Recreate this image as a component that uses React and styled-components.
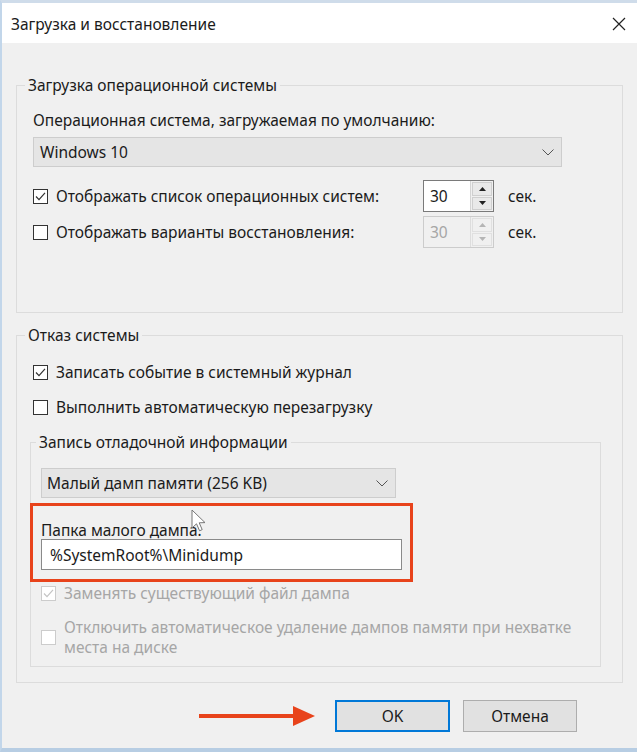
import React from 'react'
import styled, { createGlobalStyle } from 'styled-components'

const GlobalStyle = createGlobalStyle`
  html, body { margin: 0; padding: 0; background: #f0f0f0; }
  body { font-family: "Noto Sans", "Open Sans", sans-serif; color: #1b1b1b; font-size: 15.5px; }
  * { box-sizing: border-box; }
`;

const Window = styled.div`
  width: 637px;
  height: 752px;
  display: flex;
  flex-direction: column;
  border-top: 3px solid #cfdcea;
  border-left: 2px solid #c2d6ea;
  border-bottom: 4px solid #b7cde3;
  background: #f0f0f0;
  overflow: hidden;
`;

const TitleBar = styled.div`
  height: 40px;
  flex: none;
  background: #ffffff;
  display: flex;
  align-items: center;
  justify-content: space-between;
  padding: 2px 11px 0 9px;
`;

const Body = styled.div`
  flex: 1;
  padding: 32px 14px 0 14px;
  display: flex;
  flex-direction: column;
`;

const Group = styled.fieldset`
  margin: 0;
  margin-top: ${p => p.$top || 0}px;
  padding: 0;
  min-width: 0;
  border: 1px solid #dcdcdc;
  width: ${p => p.$width ? p.$width + 'px' : 'auto'};
  margin-left: ${p => p.$left || 0}px;
`;

const Legend = styled.legend`
  margin-left: ${p => p.$offset}px;
  padding: 0 3px;
  line-height: 20px;
`;

const GroupBody = styled.div`
  display: flex;
  flex-direction: column;
  padding: ${p => p.$pad};
`;

const Label = styled.div`
  line-height: ${p => p.$lh || 20}px;
  margin-bottom: ${p => p.$mb || 0}px;
`;

const Select = styled.div`
  width: ${p => p.$width}px;
  height: 30px;
  flex: none;
  background: #e5e5e5;
  border: 1px solid #cdcdcd;
  display: flex;
  align-items: center;
  justify-content: space-between;
  padding: 0 7px 0 ${p => p.$padLeft}px;
  margin-top: ${p => p.$mt || 0}px;
  margin-bottom: ${p => p.$mb || 0}px;
`;

const SpinRow = styled.div`
  display: grid;
  grid-template-columns: 390px 71px auto;
  align-items: center;
  height: 32px;
  margin-bottom: ${p => p.$mb || 0}px;
`;

const CheckRow = styled.label`
  display: flex;
  align-items: center;
  gap: 8px;
  line-height: 20px;
  color: ${p => p.$disabled ? '#a6a6a6' : '#1b1b1b'};
  margin-top: ${p => p.$top || 0}px;
`;

const CheckText = styled.span`
  max-width: ${p => p.$max ? p.$max + 'px' : 'none'};
`;

const Box = styled.span`
  width: 15px;
  height: 15px;
  flex: none;
  background: #ffffff;
  border: 1px solid ${p => p.$disabled ? '#cccccc' : '#333333'};
  display: flex;
  align-items: center;
  justify-content: center;
`;

const Spin = styled.div`
  height: 32px;
  display: flex;
  border: 1px solid ${p => p.$disabled ? '#cccccc' : '#7a7a7a'};
  background: ${p => p.$disabled ? '#f0f0f0' : '#ffffff'};
`;

const SpinValue = styled.div`
  flex: 1;
  display: flex;
  align-items: center;
  padding-left: 6px;
  color: ${p => p.$disabled ? '#a6a6a6' : '#1b1b1b'};
`;

const SpinButtons = styled.div`
  width: 23px;
  display: flex;
  flex-direction: column;
  gap: 1px;
  padding: 1px;
  background: #f0f0f0;
  border-left: 1px solid ${p => p.$disabled ? '#dddddd' : '#d4d4d4'};
`;

const SpinButton = styled.div`
  flex: 1;
  display: flex;
  align-items: center;
  justify-content: center;
  background: ${p => p.$disabled ? '#f0f0f0' : '#e9e9e9'};
  border: 1px solid ${p => p.$disabled ? '#e0e0e0' : '#cfcfcf'};
`;

const Unit = styled.span`
  padding-left: 14px;
`;

const Highlight = styled.div`
  position: relative;
  width: 383px;
  margin-left: -11px;
  margin-top: 5px;
  border: 3px solid #e8431b;
  padding: 15px 0 9px 8px;
`;

const TextInput = styled.div`
  width: 361px;
  height: 31px;
  background: #ffffff;
  border: 1px solid #8a8a8a;
  display: flex;
  align-items: center;
  padding-left: 8px;
`;

const Cursor = styled.svg`
  position: absolute;
  left: 158px;
  top: 3px;
`;

const ButtonRow = styled.div`
  display: flex;
  justify-content: flex-end;
  align-items: center;
  gap: 13px;
  margin-top: 17px;
  padding-right: 46px;
`;

const Button = styled.div`
  width: ${p => p.$width}px;
  height: 32px;
  display: flex;
  align-items: center;
  justify-content: center;
  background: #e1e1e1;
  border: ${p => p.$primary ? '2px solid #0078d7' : '1px solid #adadad'};
`;

const Arrow = styled.svg`
  margin-right: 7px;
`;

function Check({ checked, disabled }) {
  const c = disabled ? '#c4c4c4' : '#333333';
  return (
    <Box $disabled={disabled}>
      {checked && (
        <svg width="13" height="13" viewBox="0 0 13 13">
          <path d="M2 6.5 L5 9.6 L11 2.8" fill="none" stroke={c} strokeWidth="1.2" />
        </svg>
      )}
    </Box>
  );
}

function Chevron() {
  return (
    <svg width="12" height="7" viewBox="0 0 12 7">
      <path d="M0.5 0.5 L6 6 L11.5 0.5" fill="none" stroke="#555" strokeWidth="1" />
    </svg>
  );
}

function Spinner({ value, disabled }) {
  const c = disabled ? '#b5b5b5' : '#222';
  return (
    <Spin $disabled={disabled}>
      <SpinValue $disabled={disabled}>{value}</SpinValue>
      <SpinButtons $disabled={disabled}>
        <SpinButton $disabled={disabled}>
          <svg width="7" height="4" viewBox="0 0 7 4"><path d="M0 4 L3.5 0 L7 4 Z" fill={c} /></svg>
        </SpinButton>
        <SpinButton $disabled={disabled}>
          <svg width="7" height="4" viewBox="0 0 7 4"><path d="M0 0 L3.5 4 L7 0 Z" fill={c} /></svg>
        </SpinButton>
      </SpinButtons>
    </Spin>
  );
}

export default function App() {
  return (
    <>
      <GlobalStyle />
      <Window>
        <TitleBar>
          <span>Загрузка и восстановление</span>
          <svg width="14" height="14" viewBox="0 0 14 14">
            <path d="M1 1 L13 13 M13 1 L1 13" stroke="#222" strokeWidth="1.2" />
          </svg>
        </TitleBar>
        <Body>
          <Group>
            <Legend $offset={8}>Загрузка операционной системы</Legend>
            <GroupBody $pad="15px 0 64px 16px">
              <Label $mb={7}>Операционная система, загружаемая по умолчанию:</Label>
              <Select $width={529} $padLeft={6} $mb={13}>
                <span>Windows 10</span>
                <Chevron />
              </Select>
              <SpinRow $mb={4}>
                <CheckRow>
                  <Check checked />
                  <span>Отображать список операционных систем:</span>
                </CheckRow>
                <Spinner value="30" />
                <Unit>сек.</Unit>
              </SpinRow>
              <SpinRow>
                <CheckRow>
                  <Check />
                  <span>Отображать варианты восстановления:</span>
                </CheckRow>
                <Spinner value="30" disabled />
                <Unit>сек.</Unit>
              </SpinRow>
            </GroupBody>
          </Group>

          <Group $top={12}>
            <Legend $offset={8}>Отказ системы</Legend>
            <GroupBody $pad="17px 0 15px 16px">
              <CheckRow>
                <Check checked />
                <span>Записать событие в системный журнал</span>
              </CheckRow>
              <CheckRow $top={15}>
                <Check />
                <span>Выполнить автоматическую перезагрузку</span>
              </CheckRow>

              <Group $top={15} $left={-3} $width={571}>
                <Legend $offset={5}>Запись отладочной информации</Legend>
                <GroupBody $pad="16px 0 9px 10px">
                  <Select $width={355} $padLeft={5}>
                    <span>Малый дамп памяти (256 KB)</span>
                    <Chevron />
                  </Select>
                  <Highlight>
                    <Label $lh={18}>Папка малого дампа:</Label>
                    <TextInput>%SystemRoot%\Minidump</TextInput>
                    <Cursor width="16" height="24" viewBox="0 0 16 24">
                      <path d="M1 1 L1 19 L5.5 14.8 L8.6 21.8 L11.2 20.6 L8.2 13.8 L14 13.6 Z" fill="#ffffff" stroke="#777" strokeWidth="1" />
                    </Cursor>
                  </Highlight>
                  <CheckRow $disabled $top={1}>
                    <Check checked disabled />
                    <span>Заменять существующий файл дампа</span>
                  </CheckRow>
                  <CheckRow $disabled $top={14}>
                    <Check disabled />
                    <CheckText $max={510}>
                      Отключить автоматическое удаление дампов памяти при нехватке места на диске
                    </CheckText>
                  </CheckRow>
                </GroupBody>
              </Group>
            </GroupBody>
          </Group>

          <ButtonRow>
            <Arrow width="116" height="22" viewBox="0 0 116 22">
              <path d="M0 11 L98 11" stroke="#e8431b" strokeWidth="4" />
              <path d="M94 1 L116 11 L94 21 Z" fill="#e8431b" />
            </Arrow>
            <Button $primary $width={115}>OK</Button>
            <Button $width={114}>Отмена</Button>
          </ButtonRow>
        </Body>
      </Window>
    </>
  );
}
